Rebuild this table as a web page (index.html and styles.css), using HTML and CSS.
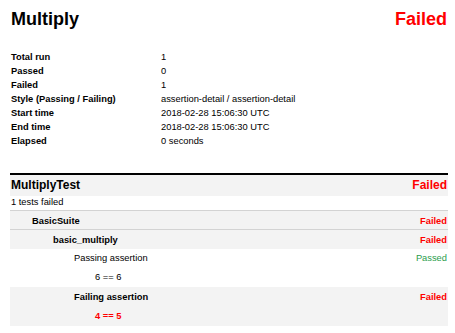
FILE: index.html
```html
<!DOCTYPE html>
<html lang="en">
<head>
<meta charset="utf-8">
<title>Multiply</title>
<link rel="stylesheet" href="styles.css">
</head>
<body>
<div class="page">
  <header class="title-bar">
    <h1 class="title">Multiply</h1>
    <span class="status-failed">Failed</span>
  </header>
  <dl class="stats">
    <dt>Total run</dt><dd>1</dd>
    <dt>Passed</dt><dd>0</dd>
    <dt>Failed</dt><dd>1</dd>
    <dt>Style (Passing / Failing)</dt><dd>assertion-detail / assertion-detail</dd>
    <dt>Start time</dt><dd>2018-02-28 15:06:30 UTC</dd>
    <dt>End time</dt><dd>2018-02-28 15:06:30 UTC</dd>
    <dt>Elapsed</dt><dd>0 seconds</dd>
  </dl>
  <section class="suite">
    <div class="suite-head">
      <span>MultiplyTest</span>
      <span class="status-failed">Failed</span>
    </div>
    <div class="summary">1 tests failed</div>
    <div class="row group-row">
      <span class="name">BasicSuite</span>
      <span class="status-failed">Failed</span>
    </div>
    <div class="row test-row">
      <span class="name">basic_multiply</span>
      <span class="status-failed">Failed</span>
    </div>
    <div class="assert assert-pass">
      <div class="assert-body">
        <div class="assert-name">Passing assertion</div>
        <div class="assert-expr">6 == 6</div>
      </div>
      <span class="status-passed">Passed</span>
    </div>
    <div class="assert assert-fail">
      <div class="assert-body">
        <div class="assert-name">Failing assertion</div>
        <div class="assert-expr">4 == 5</div>
      </div>
      <span class="status-failed">Failed</span>
    </div>
  </section>
</div>
</body>
</html>
```

FILE: styles.css
```css
html, body {
  margin: 0;
  padding: 0;
  background: #ffffff;
}

body {
  font-family: "Liberation Sans", Arial, sans-serif;
  font-size: 9.33px;
  color: #000000;
}

.page {
  padding: 9px 7px 0 10px;
}

.title-bar {
  display: flex;
  justify-content: space-between;
  align-items: baseline;
  padding: 0 1px;
  font-size: 18px;
  font-weight: bold;
  line-height: 21px;
}

.title {
  margin: 0;
  font-size: 18px;
  font-weight: bold;
}

.status-failed {
  color: #ff0000;
  font-weight: bold;
}

.status-passed {
  color: #2a9d4c;
}

.stats {
  display: grid;
  grid-template-columns: 150px 1fr;
  margin: 20px 0 0;
  padding-left: 1px;
  line-height: 14px;
}

.stats dt {
  font-weight: bold;
}

.stats dd {
  margin: 0;
}

.suite {
  margin-top: 25px;
  border-top: 2px solid #000000;
}

.suite-head {
  display: flex;
  justify-content: space-between;
  background: #f3f3f3;
  padding: 0 1px;
  font-size: 12px;
  font-weight: bold;
  line-height: 21px;
}

.summary {
  padding: 0 1px 1px;
  line-height: 13px;
}

.row {
  display: flex;
  justify-content: space-between;
  background: #f3f3f3;
  border-top: 1px solid #d3d3d3;
  line-height: 14px;
  padding-right: 1px;
}

.row .name {
  font-weight: bold;
}

.group-row {
  padding-top: 3px;
  padding-bottom: 1px;
  padding-left: 22px;
}

.test-row {
  padding-top: 3px;
  padding-bottom: 2px;
  padding-left: 43px;
}

.assert {
  display: flex;
  justify-content: space-between;
  align-items: flex-start;
  padding: 0 1px 0 64px;
  line-height: 19px;
}

.assert-expr {
  margin-left: 21px;
}

.assert-pass {
  background: #ffffff;
}

.assert-fail {
  background: #f3f3f3;
  padding-top: 1px;
}

.assert-fail .assert-name {
  font-weight: bold;
}

.assert-fail .assert-expr {
  color: #ff0000;
  font-weight: bold;
}
```
